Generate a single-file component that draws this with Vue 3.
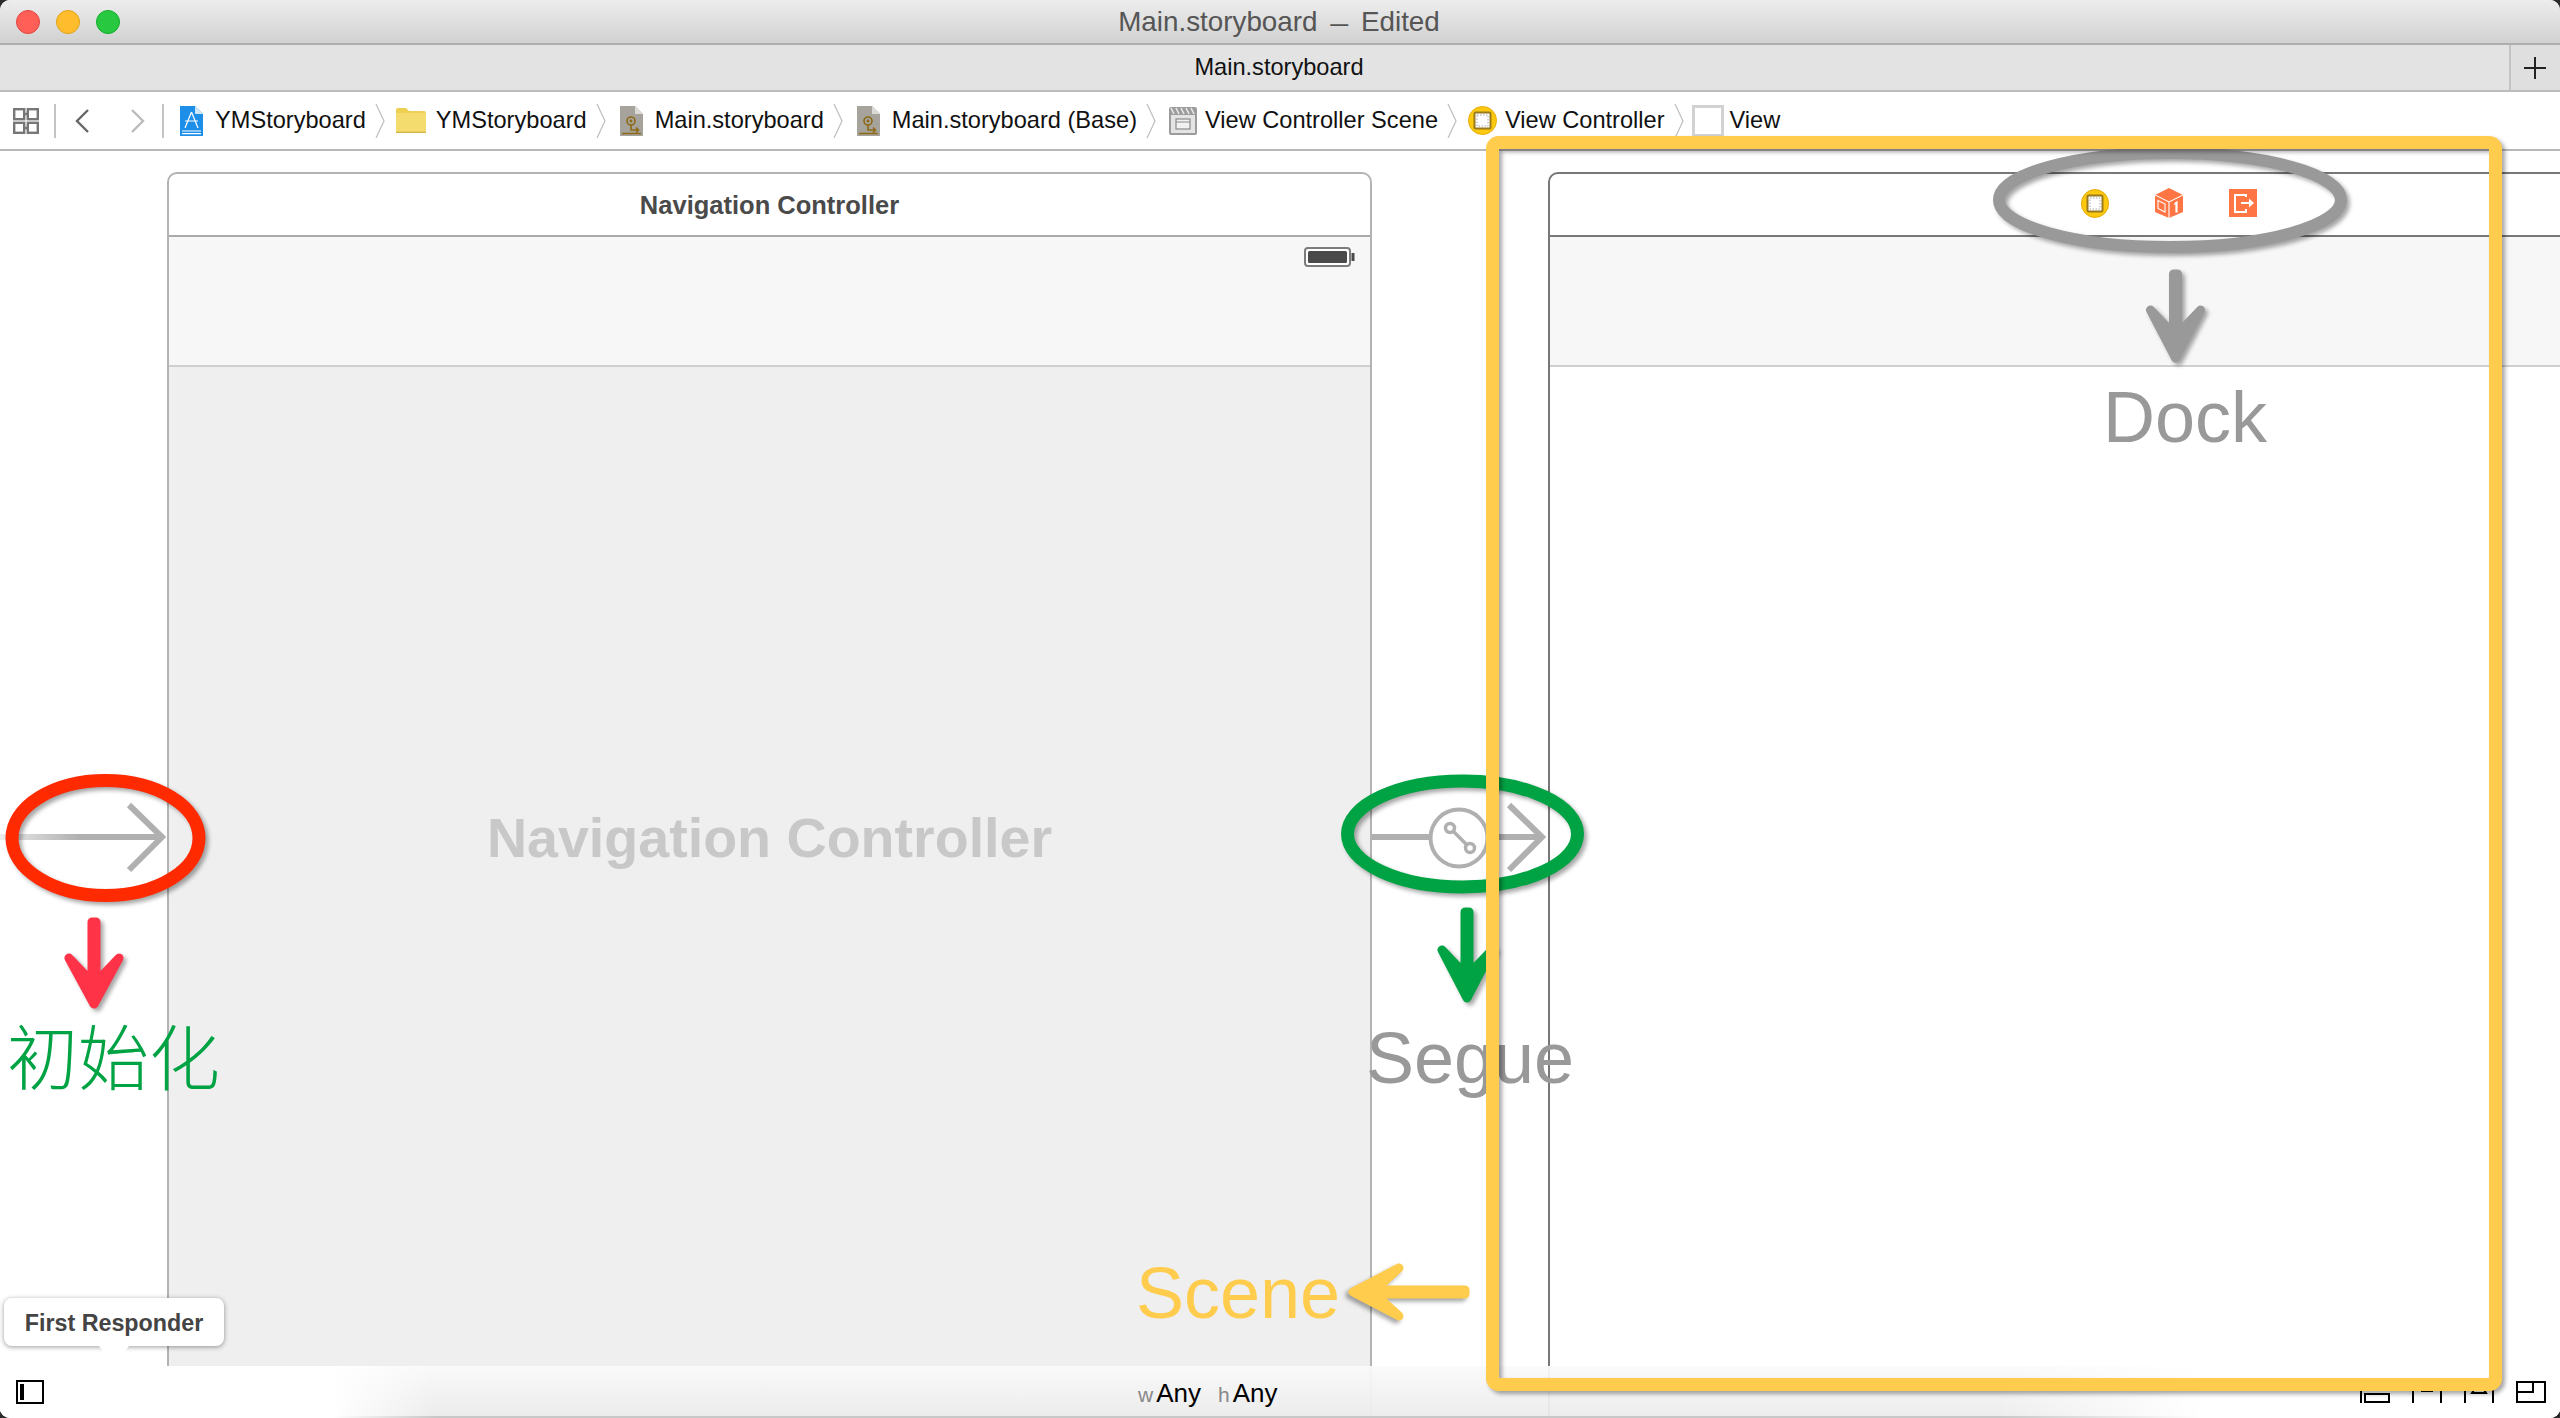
<template>
  <div class="window">
    <!-- window chrome -->
    <div class="titlebar">
      <div class="lights">
        <span class="light red"></span>
        <span class="light yellow"></span>
        <span class="light green"></span>
      </div>
      <span class="title">Main.storyboard <span class="dash">—</span> Edited</span>
    </div>

    <div class="tabbar">
      <span class="tab">Main.storyboard</span>
      <span class="plus"><i></i></span>
    </div>

    <div class="pathbar">
      <svg class="grid-icon" width="26" height="26" viewBox="0 0 26 26">
        <g fill="none" stroke="#777" stroke-width="2.4">
          <rect x="1.2" y="1.2" width="10" height="10" />
          <rect x="14.8" y="1.2" width="10" height="10" />
          <rect x="1.2" y="14.8" width="10" height="10" />
          <rect x="14.8" y="14.8" width="10" height="10" />
          <path d="M11 6h4M11 20h4" />
        </g>
      </svg>
      <span class="vsep first"></span>
      <svg class="nav back" width="14" height="24" viewBox="0 0 14 24">
        <path d="M13 1 2 12l11 11" fill="none" stroke="#666" stroke-width="2.4" />
      </svg>
      <svg class="nav forward" width="14" height="24" viewBox="0 0 14 24">
        <path d="M1 1l11 11L1 23" fill="none" stroke="#bbb" stroke-width="2.4" />
      </svg>
      <span class="vsep second"></span>

      <template v-for="(c, i) in crumbs" :key="i">
        <span class="crumb" :class="'crumb-' + c.kind">
          <svg v-if="c.kind === 'project'" width="23" height="30" viewBox="0 0 23 30">
            <path d="M0 0h15l8 8v22H0z" fill="#1e8fe9" />
            <path d="M15 0l8 8h-8z" fill="#cfe6fa" />
            <g fill="none" stroke="#fff" stroke-width="1.2">
              <path d="M11.5 6 5 22M11.5 6 18 22M5 15h13" />
              <path d="M2 25h19M2 27.6h19" />
            </g>
          </svg>
          <svg v-else-if="c.kind === 'folder'" width="30" height="25" viewBox="0 0 30 25">
            <path d="M0 2q0-2 2-2h8l3 3h15q2 0 2 2v20H0z" fill="#edcf52" />
            <rect y="5" width="30" height="20" fill="#f4dd6e" />
            <rect y="23.6" width="30" height="1.4" fill="#d4b94a" />
          </svg>
          <svg v-else-if="c.kind === 'board'" width="23" height="30" viewBox="0 0 23 30">
            <path d="M0 0h15l8 8v22H0z" fill="#a6a29c" />
            <path d="M15 0l8 8h-8z" fill="#dcdad6" />
            <g fill="none" stroke="#8d6a16" stroke-width="1.6">
              <circle cx="11" cy="15" r="4" />
              <path d="M11 19v5h7M16 21.5l2.5 2.5-2.5 2.5M2 27.5h19" />
            </g>
            <circle cx="11" cy="15" r="1.4" fill="#8d6a16" />
          </svg>
          <svg v-else-if="c.kind === 'scene'" width="28" height="28" viewBox="0 0 28 28">
            <rect width="28" height="28" rx="2" fill="#9c9c9c" />
            <path d="M2 1l3 6M7 1l3 6M12 1l3 6M17 1l3 6M22 1l3 6" stroke="#e8e8e8" stroke-width="1.6" />
            <rect x="2" y="8" width="24" height="18" fill="#e4e4e4" />
            <rect x="7" y="12" width="14" height="10" fill="#f2f2f2" stroke="#8a8a8a" stroke-width="1.2" />
            <path d="M7 15h14" stroke="#8a8a8a" stroke-width="1" />
          </svg>
          <svg v-else-if="c.kind === 'vc'" width="29" height="29" viewBox="0 0 29 29">
            <circle cx="14.5" cy="14.5" r="14" fill="#fdc90f" stroke="#e5ac08" />
            <rect x="6.5" y="6.5" width="16" height="16" rx="1" fill="#fff" stroke="#9a7a1a" stroke-width="2" />
            <rect x="9" y="9" width="11" height="11" fill="none" stroke="#aaa" stroke-dasharray="1.5 1.5" />
          </svg>
          <svg v-else width="32" height="32" viewBox="0 0 32 32">
            <rect x="1.5" y="1.5" width="29" height="29" fill="#fff" stroke="#d2d2d2" stroke-width="3" />
          </svg>
          <span class="crumb-text">{{ c.label }}</span>
        </span>
        <svg v-if="i < crumbs.length - 1" class="chev" width="10" height="34" viewBox="0 0 10 34">
          <path d="M1 0l8 17-8 17" fill="none" stroke="#bdbdbd" stroke-width="1.2" />
        </svg>
      </template>
    </div>

    <!-- storyboard canvas -->
    <div class="canvas">
      <div class="scene nav-scene">
        <div class="scene-head">
          <span class="scene-name">Navigation Controller</span>
        </div>
        <div class="scene-view">
          <div class="navbar">
            <svg class="battery" width="51" height="20" viewBox="0 0 51 20">
              <rect x="1" y="1" width="45" height="18" rx="3" fill="#fff" stroke="#7c7c7c" stroke-width="2" />
              <rect x="4" y="4" width="39" height="12" rx="1.5" fill="#4a4a4a" />
              <rect x="47.5" y="6" width="3" height="8" fill="#4a4a4a" />
            </svg>
          </div>
          <span class="watermark">Navigation Controller</span>
        </div>
      </div>

      <div class="scene vc-scene">
        <div class="scene-head dock">
          <svg width="28" height="29" viewBox="0 0 28 29">
            <ellipse cx="14" cy="14.5" rx="13.6" ry="14" fill="#fdc90f" stroke="#e5ac08" />
            <rect x="6.5" y="6.5" width="15" height="16" rx="1" fill="#fff" stroke="#9a7a1a" stroke-width="2" />
            <rect x="9" y="9" width="10" height="11" fill="none" stroke="#aaa" stroke-dasharray="1.5 1.5" />
          </svg>
          <svg width="28" height="30" viewBox="0 0 28 30">
            <path d="M14 0l14 7v17l-14 6-14-6V7z" fill="#ff7544" />
            <g fill="none" stroke="#fff" stroke-width="1.1">
              <path d="M0 7l14 7 14-7M14 14v16" />
              <path d="M3 12.5l7 3.5v8l-7-3.5z" />
            </g>
            <path d="M20 14.5l2.6-1.8v11.8h-2.2v-8.2l-1.8 1z" fill="#fff" />
          </svg>
          <svg width="28" height="28" viewBox="0 0 28 28">
            <rect width="28" height="28" fill="#ff7544" />
            <path d="M17 8V6H6v17h11v-3" fill="none" stroke="#fff" stroke-width="2" />
            <path d="M12 13h8V9.5l5 4.5-5 4.5V15h-8z" fill="#fff" />
          </svg>
        </div>
        <div class="scene-view">
          <div class="navbar"></div>
        </div>
      </div>

      <div class="bottombar">
        <svg width="28" height="24" viewBox="0 0 28 24">
          <rect x="1" y="1" width="26" height="22" fill="none" stroke="#000" stroke-width="2" />
          <rect x="4" y="4" width="4" height="16" fill="#000" />
        </svg>
        <span class="size-class"><small>w</small>Any<small class="h">h</small>Any</span>
        <div class="layout-icons">
          <svg width="30" height="22" viewBox="0 0 30 22">
            <path d="M1 0v22" stroke="#000" stroke-width="2" />
            <rect x="5" y="13" width="24" height="8" fill="none" stroke="#000" stroke-width="2" />
          </svg>
          <svg width="30" height="22" viewBox="0 0 30 22">
            <path d="M1 22V1h6M29 22V1h-6" fill="none" stroke="#000" stroke-width="2" />
            <path d="M10 1v9h10V1" fill="none" stroke="#000" stroke-width="2" />
          </svg>
          <svg width="30" height="22" viewBox="0 0 30 22">
            <path d="M1 22V1h5M29 22V1h-5" fill="none" stroke="#000" stroke-width="2" />
            <path d="M8 12 15 1l7 11z" fill="none" stroke="#000" stroke-width="2" />
          </svg>
          <svg width="30" height="22" viewBox="0 0 30 22">
            <rect x="1" y="1" width="28" height="20" fill="none" stroke="#000" stroke-width="2" />
            <path d="M1 11h16V1" fill="none" stroke="#000" stroke-width="2" />
          </svg>
        </div>
      </div>
    </div>

    <!-- hand drawn notes on top of the screenshot -->
    <svg class="notes" width="2560" height="1418" viewBox="0 0 2560 1418">
      <defs>
        <linearGradient id="fade" gradientUnits="userSpaceOnUse" x1="0" x2="80" y1="0" y2="0">
          <stop offset="0" stop-color="#b0b0b0" stop-opacity="0.25" />
          <stop offset="1" stop-color="#b0b0b0" />
        </linearGradient>
      </defs>

      <!-- initial arrow -->
      <g fill="none" stroke-width="6">
        <path d="M0 837H163" stroke="url(#fade)" />
        <path d="M129 805l33 32-33 33" stroke="#b0b0b0" />
      </g>
      <!-- segue -->
      <g fill="none" stroke="#b0b0b0">
        <path d="M1372 837h58M1488 837h55" stroke-width="6" />
        <path d="M1509 805l33 32-33 33" stroke-width="6" />
        <circle cx="1459" cy="838" r="28.5" stroke-width="4" />
        <circle cx="1450" cy="828" r="4.5" stroke-width="3.5" />
        <circle cx="1470" cy="848" r="4.5" stroke-width="3.5" />
        <path d="M1453.5 831.5l13 13" stroke-width="3.5" />
      </g>

      <g class="ink">
        <ellipse cx="2170" cy="200" rx="171" ry="47" fill="none" stroke="#999" stroke-width="12" />
      </g>
      <g class="ink">
        <ellipse cx="105.5" cy="838" rx="93.5" ry="57.5" fill="none" stroke="#ff2a00" stroke-width="13" />
      </g>
      <g class="ink">
        <ellipse cx="1462.5" cy="834" rx="115" ry="53" fill="none" stroke="#00a344" stroke-width="13" />
      </g>
      <path
        v-for="a in arrows"
        :key="a.id"
        class="ink"
        :d="arrowPath(a)"
        :fill="a.color"
        :stroke="a.color"
        stroke-width="9"
        stroke-linejoin="round"
        :transform="`translate(${a.x} ${a.y}) rotate(${a.rot})`"
      />

      <text class="note" x="2185" y="442" text-anchor="middle" fill="#999">Dock</text>
      <text class="note" x="1470" y="1083" text-anchor="middle" fill="#999">Segue</text>
      <text class="note" x="1238" y="1318" text-anchor="middle" fill="#ffcc4d">Scene</text>
      <text class="note cjk" x="7" y="1084" fill="#00a344">初始化</text>

      <rect class="ink" x="1492.5" y="142.5" width="1003" height="1242" rx="6" fill="none" stroke="#ffcc4d" stroke-width="13" />
    </svg>

    <div class="responder">First Responder</div>
  </div>
</template>

<script setup>
const crumbs = [
  { kind: 'project', label: 'YMStoryboard' },
  { kind: 'folder', label: 'YMStoryboard' },
  { kind: 'board', label: 'Main.storyboard' },
  { kind: 'board', label: 'Main.storyboard (Base)' },
  { kind: 'scene', label: 'View Controller Scene' },
  { kind: 'vc', label: 'View Controller' },
  { kind: 'view', label: 'View' }
]

// len = tail to tip, spread = half width of the head, head = head length
const arrows = [
  { id: 'dock', x: 2175.5, y: 274, rot: 0, len: 88, spread: 25, head: 48, color: '#999' },
  { id: 'init', x: 94, y: 922, rot: 0, len: 86, spread: 25, head: 46, color: '#ff3347' },
  { id: 'segue', x: 1467, y: 912, rot: 0, len: 90, spread: 25, head: 48, color: '#00a344' },
  { id: 'scene', x: 1465, y: 1292, rot: 90, len: 116, spread: 24, head: 46, color: '#ffcc4d' }
]

function arrowPath(a) {
  const tip = a.len - 4
  const base = tip - a.head
  return `M-2 0V${base + 22}H-4L${-a.spread} ${base}L0 ${tip}L${a.spread} ${base}L4 ${base + 22}H2V0Z`
}
</script>

<style scoped>
.window {
  position: relative;
  width: 2560px;
  height: 1418px;
  overflow: hidden;
  display: flex;
  flex-direction: column;
  border-radius: 10px;
  background: #fff;
  font-family: "Liberation Sans", Arial, sans-serif;
}

.titlebar {
  flex: none;
  height: 45px;
  box-sizing: border-box;
  display: flex;
  align-items: center;
  justify-content: center;
  position: relative;
  background: linear-gradient(#ededed, #d1d1d1);
  border-bottom: 2px solid #aeaeae;
}

.lights {
  position: absolute;
  left: 16px;
  top: 10px;
  display: flex;
  gap: 16px;
}

.light {
  width: 24px;
  height: 24px;
  box-sizing: border-box;
  border-radius: 50%;
  border: 1px solid;
}

.red {
  background: #ff5f57;
  border-color: #e2463f;
}

.yellow {
  background: #ffbd2e;
  border-color: #e1a116;
}

.green {
  background: #28c940;
  border-color: #12ac28;
}

.title {
  font-size: 27.8px;
  color: #555;
  margin-right: 2px;
}

.dash {
  font-size: 18px;
  font-weight: 700;
  vertical-align: 1px;
  margin: 0 5px;
}

.tabbar {
  flex: none;
  height: 47px;
  box-sizing: border-box;
  display: flex;
  align-items: center;
  justify-content: center;
  position: relative;
  background: #e3e3e3;
  border-bottom: 2px solid #bcbcbc;
}

.tab {
  font-size: 23.6px;
  color: #111;
  margin-right: 2px;
}

.plus {
  position: absolute;
  right: 0;
  top: 0;
  bottom: 0;
  width: 49px;
  background: #dfdfdf;
  border-left: 2px solid #c4c4c4;
}

.plus i {
  position: absolute;
  left: 13px;
  top: 12px;
  width: 22px;
  height: 22px;
  background:
    linear-gradient(#222, #222) center / 22px 2px no-repeat,
    linear-gradient(#222, #222) center / 2px 22px no-repeat;
}

.pathbar {
  flex: none;
  height: 59px;
  box-sizing: border-box;
  display: flex;
  align-items: center;
  padding-left: 13px;
  background: #fff;
  border-bottom: 2px solid #b8b8b8;
}

.vsep {
  width: 2px;
  height: 34px;
  background: #c4c4c4;
}

.vsep.first {
  margin: 0 19px 0 15px;
}

.nav.back {
  margin-right: 42px;
}

.vsep.second {
  margin: 0 16px 0 17px;
}

.crumb {
  display: flex;
  align-items: center;
  gap: 12px;
  white-space: nowrap;
}

.crumb-folder {
  gap: 10px;
}

.crumb-scene,
.crumb-vc {
  gap: 8px;
}

.crumb-view {
  gap: 6px;
  margin-left: -3px;
}

.crumb-board {
  gap: 12px;
  margin-left: 3px;
}

.crumb-scene {
  margin-left: 2px;
}

.crumb-text {
  font-size: 23.6px;
  color: #111;
}

.chev {
  flex: none;
  margin: 0 11px 0 9px;
}

.canvas {
  position: relative;
  flex: 1;
  background: #fff;
}

.scene {
  position: absolute;
  top: 21px;
  height: 1269px;
  box-sizing: border-box;
  display: flex;
  flex-direction: column;
  border-radius: 10px 10px 0 0;
  background: #fff;
}

.nav-scene {
  left: 167px;
  width: 1205px;
  border: 2px solid #b3b3b3;
}

.vc-scene {
  left: 1548px;
  width: 1242px;
  border: 2px solid #777;
}

.scene-head {
  flex: none;
  height: 63px;
  box-sizing: border-box;
  display: flex;
  align-items: center;
  justify-content: center;
  border-bottom: 2px solid #aaa;
}

.vc-scene .scene-head {
  border-bottom-color: #777;
}

.dock {
  gap: 46px;
  padding-bottom: 3px;
}

.scene-name {
  font-size: 25.5px;
  font-weight: 700;
  color: #4a4a4a;
  margin-top: 1px;
}

.scene-view {
  position: relative;
  flex: 1;
  background: #efefef;
}

.vc-scene .scene-view {
  background: #fff;
}

.navbar {
  position: relative;
  height: 130px;
  box-sizing: border-box;
  background: #f7f7f7;
  border-bottom: 2px solid #cfcfcf;
}

.battery {
  position: absolute;
  right: 15px;
  top: 10px;
}

.watermark {
  position: absolute;
  left: 0;
  right: 0;
  top: 50%;
  transform: translateY(-50%);
  text-align: center;
  font-size: 55.6px;
  font-weight: 700;
  color: #c8c8c8;
}

.bottombar {
  position: absolute;
  left: 0;
  right: 0;
  bottom: 0;
  height: 52px;
  box-sizing: border-box;
  display: flex;
  align-items: center;
  padding: 0 14px 0 16px;
  background:
    linear-gradient(to right, #fff 13%, rgba(255, 255, 255, 0) 17%, rgba(255, 255, 255, 0) 78%, #fff 86%),
    linear-gradient(rgba(250, 250, 250, 0.94), rgba(236, 236, 236, 0.94) 96%, #c8c8c8 96%);
}

.size-class {
  margin-left: 1094px;
  margin-top: 2px;
  font-size: 26px;
  color: #000;
}

.size-class small {
  font-size: 21px;
  color: #888;
  margin-right: 3px;
}

.size-class small.h {
  margin-left: 17px;
}

.layout-icons {
  margin-left: auto;
  display: flex;
  gap: 22px;
}

.notes {
  position: absolute;
  left: 0;
  top: 0;
  pointer-events: none;
}

.ink {
  filter: drop-shadow(3px 3px 2px rgba(0, 0, 0, 0.35));
}

.note {
  font-size: 72px;
  font-family: "Liberation Sans", Arial, sans-serif;
}

.note.cjk {
  font-size: 71px;
  font-family: "Noto Sans CJK SC", sans-serif;
  font-weight: 300;
}

.responder {
  position: absolute;
  left: 4px;
  top: 1298px;
  width: 220px;
  height: 48px;
  box-sizing: border-box;
  display: flex;
  align-items: center;
  justify-content: center;
  background: #fff;
  border-radius: 8px;
  box-shadow: 0 1px 5px rgba(0, 0, 0, 0.4);
  font-size: 23.3px;
  font-weight: 700;
  color: #444;
  padding-top: 2px;
}

.responder::after {
  content: "";
  position: absolute;
  left: 95px;
  top: 48px;
  border-left: 15px solid transparent;
  border-right: 15px solid transparent;
  border-top: 20px solid #fff;
}
</style>

<style>
html,
body {
  background: #2a2a2a;
}
</style>
